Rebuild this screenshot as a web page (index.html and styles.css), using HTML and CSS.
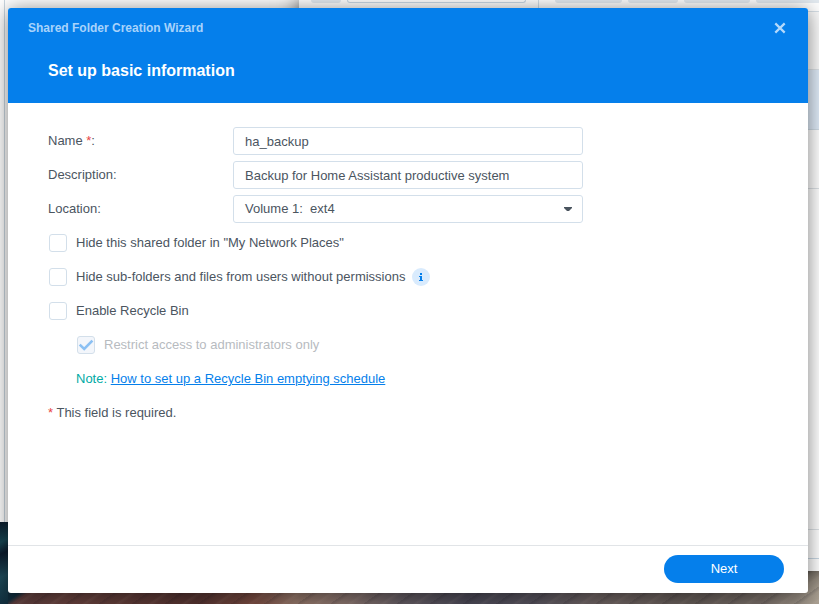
FILE: index.html
```html
<!DOCTYPE html>
<html lang="en">
<head>
<meta charset="utf-8">
<title>Shared Folder Creation Wizard</title>
<link rel="stylesheet" href="styles.css">
</head>
<body>
<div class="desktop">
  <div class="window window-left"></div>
  <div class="window window-right">
    <div class="toolbar">
      <span class="tool tool-nav"></span>
      <span class="tool-field"></span>
      <span class="tool-divider"></span>
      <span class="tool tool-a"></span>
      <span class="tool tool-b"></span>
      <span class="tool tool-c"></span>
      <span class="tool tool-d"></span>
    </div>
    <div class="list">
      <div class="list-row row-first"></div>
      <div class="list-row row-selected"></div>
      <div class="list-row row-next"></div>
      <div class="list-row row-rest"></div>
      <div class="list-row row-status"></div>
    </div>
  </div>

  <main class="dialog">
    <header class="dialog-header">
      <div class="title-bar">
        <span class="title">Shared Folder Creation Wizard</span>
        <svg class="close" width="12" height="12" viewBox="0 0 12 12"><path d="M1.3 1.4 10.7 10.6M10.7 1.4 1.3 10.6"/></svg>
      </div>
      <h1 class="step-title">Set up basic information</h1>
    </header>

    <section class="form">
      <div class="row">
        <span class="label">Name <span class="required">*</span>:</span>
        <div class="field">ha_backup</div>
      </div>
      <div class="row">
        <span class="label">Description:</span>
        <div class="field">Backup for Home Assistant productive system</div>
      </div>
      <div class="row">
        <span class="label">Location:</span>
        <div class="field select"><span>Volume 1:&nbsp; ext4</span>
          <svg class="arrow" width="8" height="4" viewBox="0 0 8 4"><path d="M0 0H8V1L5 4H3L0 1Z"/></svg>
        </div>
      </div>
      <div class="row"><span class="checkbox"></span><span class="text">Hide this shared folder in "My Network Places"</span></div>
      <div class="row"><span class="checkbox"></span><span class="text">Hide sub-folders and files from users without permissions</span>
        <svg class="info" width="18" height="18" viewBox="0 0 18 18"><circle cx="9" cy="9" r="9"/><path d="M8 5h2v2H8zM7 8h3v4h1v1H7v-1h1V9H7z"/></svg>
      </div>
      <div class="row"><span class="checkbox"></span><span class="text">Enable Recycle Bin</span></div>
      <div class="row indent disabled">
        <span class="checkbox"><svg width="16" height="16" viewBox="0 0 16 16"><path d="M1.7 7.6 6.2 11.9 14.4 3.6"/></svg></span>
        <span class="text">Restrict access to administrators only</span>
      </div>
      <div class="row indent"><span class="text"><span class="note">Note:</span> <a class="link">How to set up a Recycle Bin emptying schedule</a></span></div>
      <div class="row"><span class="text"><span class="required">*</span> This field is required.</span></div>
    </section>

    <footer class="dialog-footer"><button class="next">Next</button></footer>
  </main>
</div>
</body>
</html>
```

FILE: styles.css
```css
* { box-sizing: border-box; }

body {
  margin: 0;
  font: 13px/18px "Liberation Sans", Arial, sans-serif;
  color: #4b555f;
}

.desktop {
  position: relative;
  width: 819px;
  height: 604px;
  overflow: hidden;
  background:
    linear-gradient(155deg, #0b1b2b 0, #174654 24%, #0c1c2e 38%, #1f4c5c 65%, #102c3b 100%) 0 522px / 8px 82px no-repeat,
    linear-gradient(145deg, #102b3a 0 9px, transparent 14px) 8px 590px / 24px 14px no-repeat,
    repeating-linear-gradient(145deg, rgba(15, 12, 24, .12) 0 1px, transparent 4px 9px, rgba(255, 225, 205, .06) 11px, transparent 14px 19px),
    linear-gradient(90deg, #573a3b 0, #65403c 8%, #53322f 24%, #76493f 31%, #907366 36%, #85706a 42%, #625a60 49%, #4a4855 57%, #55515b 65%, #6b605f 73%, #625955 84%, #746a64 93%, #aaa092 100%);
}

.window { position: absolute; top: 0; background: #fff; }

.window-left {
  left: 0;
  width: 299px;
  height: 522px;
  background: linear-gradient(90deg, #fff 4px, #c9d6e0 4px 5px, #fff 5px);
}

.window-right {
  left: 299px;
  width: 530px;
  height: 571px;
  box-shadow: 0 0 20px rgba(0, 0, 0, .7);
}

.toolbar {
  display: flex;
  height: 12px;
  border-bottom: 1px solid #d6dfe6;
}

.tool { height: 3px; background: #e3eaf0; border-radius: 0 0 3px 3px; }
.tool-nav { width: 30px; margin-left: 12px; }
.tool-field {
  width: 179px;
  height: 3px;
  margin-left: 6px;
  border: 1px solid #c9d8e4;
  border-top: 0;
  border-radius: 0 0 3px 3px;
}
.tool-divider { width: 1px; margin-left: 12px; background: #d2dde6; }
.tool-a { width: 67px; margin-left: 16px; }
.tool-b { width: 50px; margin-left: 6px; }
.tool-c { width: 66px; margin-left: 6px; }
.tool-d { width: 70px; margin-left: 6px; }

.list-row { border-bottom: 1px solid #dde2e6; }
.row-first { height: 58px; background: #fafafa; }
.row-selected { height: 60px; background: #dfebf8; border-color: #d0dce6; }
.row-next { height: 59px; }
.row-rest { height: 341px; }
.row-status { height: 29px; border-color: #c9d8e4; }

.dialog {
  position: absolute;
  left: 8px;
  top: 8px;
  width: 800px;
  height: 585px;
  display: flex;
  flex-direction: column;
  background: #fff;
  border-radius: 3px;
  overflow: hidden;
  box-shadow: 0 2px 20px rgba(0, 0, 0, .5);
}

.dialog-header { height: 95px; background: #057feb; }

.title-bar {
  display: flex;
  align-items: center;
  justify-content: space-between;
  height: 40px;
  padding: 0 22px 0 20px;
}

.title { font-size: 12px; font-weight: bold; color: #a8d3fb; }
.close { fill: none; stroke: #b4d9fb; stroke-width: 2.2; }

.step-title {
  margin: 0;
  padding: 13px 40px 0;
  font-size: 16px;
  line-height: 20px;
  color: #fff;
}

.form { flex: 1; padding: 24px 40px 0; }

.row { display: flex; height: 34px; }
.row > .label { width: 185px; padding-top: 5px; }
.row > .text { padding-top: 5px; white-space: nowrap; }
.indent { padding-left: 28px; }

.field {
  width: 350px;
  height: 28px;
  padding: 5px 11px 3px;
  border: 1px solid #d3dfea;
  border-radius: 3px;
}

.select {
  display: flex;
  align-items: center;
  justify-content: space-between;
  padding: 3px 10px 3px 11px;
}

.arrow { fill: #4a545e; }

.checkbox {
  width: 18px;
  height: 18px;
  margin: 5px 9px 0 1px;
  border: 1px solid #d3dfea;
  border-radius: 3px;
}

.checkbox svg { display: block; fill: none; stroke: #8bc0f3; stroke-width: 2.6; }
.disabled { color: #b7bbbf; }
.disabled .checkbox { background: #f3f6fb; }

.info { margin: 5px 0 0 7px; fill: #d9ebfd; }
.info path { fill: #057feb; }

.required { color: #e84545; }
.note { color: #00aaa5; }
.link { color: #057feb; text-decoration: underline; }

.dialog-footer {
  display: flex;
  justify-content: flex-end;
  height: 48px;
  padding: 9px 24px 0 0;
  border-top: 1px solid #e1e4e7;
}

.next {
  width: 120px;
  height: 28px;
  padding: 0 0 1px;
  border: 0;
  border-radius: 14px;
  background: #057feb;
  color: #fff;
  font: inherit;
}
```
